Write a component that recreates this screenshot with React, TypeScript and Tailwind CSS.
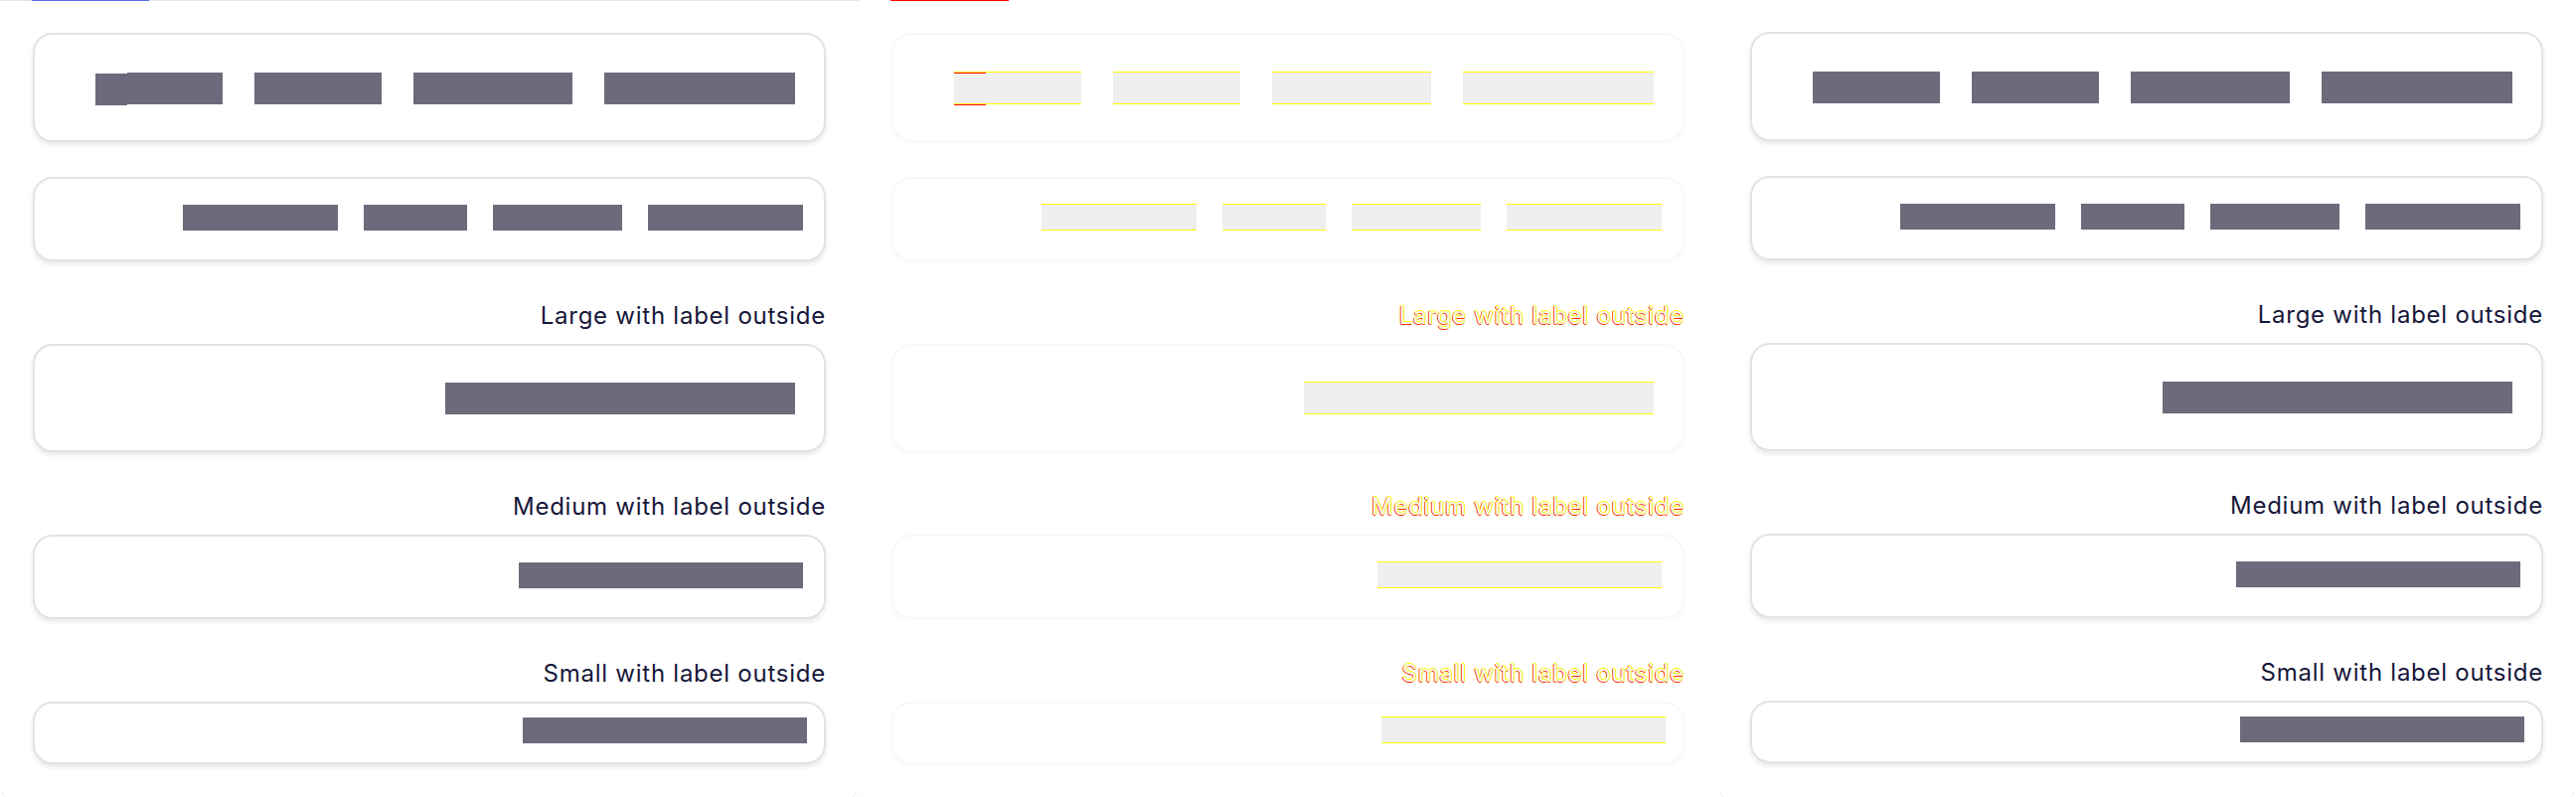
import clsx from 'clsx'
import type { ReactNode } from 'react'

type Mode = 'before' | 'diff' | 'after'

const FONT = "font-['Inter','Noto_Sans',sans-serif]"

function Bar({ mode, lg, w, first }: { mode: Mode; lg?: boolean; w: string; first?: boolean }) {
  if (mode === 'diff') {
    return (
      <div className={clsx('relative -mt-px border-y border-[#ffff00] bg-[#efefef]', lg ? 'h-[33px]' : 'h-[27px]', w)}>
        {first && (
          <>
            <div className="absolute left-0 top-0 h-px w-8 bg-[#ff0000]" />
            <div className="absolute bottom-[-2px] left-0 h-px w-8 bg-[#ff0000]" />
          </>
        )}
      </div>
    )
  }
  if (mode === 'before' && first) {
    // the first tab renders with a stray 1px-lower block on its left
    return (
      <div className="flex h-8 items-start">
        <div className="mt-px h-8 w-8 bg-[#6b6b7c]" />
        <div className="h-8 w-24 bg-[#6b6b7c]" />
      </div>
    )
  }
  return <div className={clsx('bg-[#6b6b7c]', lg ? 'h-8' : 'h-[26px]', w)} />
}

function Card({ mode, className, children }: { mode: Mode; className: string; children: ReactNode }) {
  return (
    <div
      className={clsx(
        'flex items-start justify-end rounded-[20px] border-2 bg-white',
        mode === 'diff'
          ? 'border-[#f8f8f8] shadow-[0_3px_5px_rgba(0,0,0,0.02)]'
          : 'border-[#e3e3e3] shadow-[0_3px_5px_rgba(0,0,0,0.09)]',
        className,
      )}
    >
      {children}
    </div>
  )
}

function Label({ mode, children }: { mode: Mode; children: ReactNode }) {
  return (
    <p
      className={clsx(
        'mb-3 mt-[39px] text-right text-2xl leading-8 tracking-[0.75px]',
        mode === 'diff'
          ? 'text-[#f4f4f4] [text-shadow:0_-1px_0_#ffff00,1px_0_0_#ffee00,-1px_0_0_#ff1a00,0_1px_0_#ff3000]'
          : 'text-[#17173a]',
      )}
    >
      {children}
    </p>
  )
}

function Panel({ mode }: { mode: Mode }) {
  return (
    <div
      className={clsx(
        'h-[806px] w-[864px] shrink-0 rounded-b-[16px] border-b bg-white',
        mode === 'diff' ? 'border-[#f3f3f3]' : 'border-[#e6e6e6]',
      )}
    >
      {mode === 'before' && (
        <div className="flex h-px bg-[#e5e5e5]">
          <div className="ml-8 w-[118px] bg-[#4f6be6]" />
        </div>
      )}
      {mode === 'diff' && (
        <div className="flex h-px">
          <div className="ml-8 w-[119px] bg-[#ff0000]" />
        </div>
      )}

      <div className="px-[33px] pt-8">
        {/* tabs, large */}
        <Card mode={mode} className="pb-[36px] pr-[29px] pt-[38px]">
          <div className="flex h-8 items-start gap-8">
            <Bar mode={mode} lg w="w-32" first />
            <Bar mode={mode} lg w="w-32" />
            <Bar mode={mode} lg w="w-40" />
            <Bar mode={mode} lg w="w-48" />
          </div>
        </Card>

        {/* tabs, medium */}
        <Card mode={mode} className="mt-[35px] pb-[29px] pr-[21px] pt-[26px]">
          <div className="flex h-[26px] items-start gap-[26px]">
            <Bar mode={mode} w="w-[156px]" />
            <Bar mode={mode} w="w-[104px]" />
            <Bar mode={mode} w="w-[130px]" />
            <Bar mode={mode} w="w-[156px]" />
          </div>
        </Card>

        <Label mode={mode}>Large with label outside</Label>
        <Card mode={mode} className="pb-[36px] pr-[29px] pt-[37px]">
          <div className="flex h-8 items-start">
            <Bar mode={mode} lg w="w-[352px]" />
          </div>
        </Card>

        <Label mode={mode}>Medium with label outside</Label>
        <Card mode={mode} className="pb-[29px] pr-[21px] pt-[26px]">
          <div className="flex h-[26px] items-start">
            <Bar mode={mode} w="w-[286px]" />
          </div>
        </Card>

        <Label mode={mode}>Small with label outside</Label>
        <Card mode={mode} className="pb-[19px] pr-[17px] pt-[14px]">
          <div className="flex h-[26px] items-start">
            <Bar mode={mode} w="w-[286px]" />
          </div>
        </Card>
      </div>
    </div>
  )
}

export default function App() {
  return (
    <div className={clsx('flex h-[802px] w-[2592px] overflow-hidden bg-white', FONT)}>
      <Panel mode="before" />
      <Panel mode="diff" />
      <Panel mode="after" />
    </div>
  )
}
